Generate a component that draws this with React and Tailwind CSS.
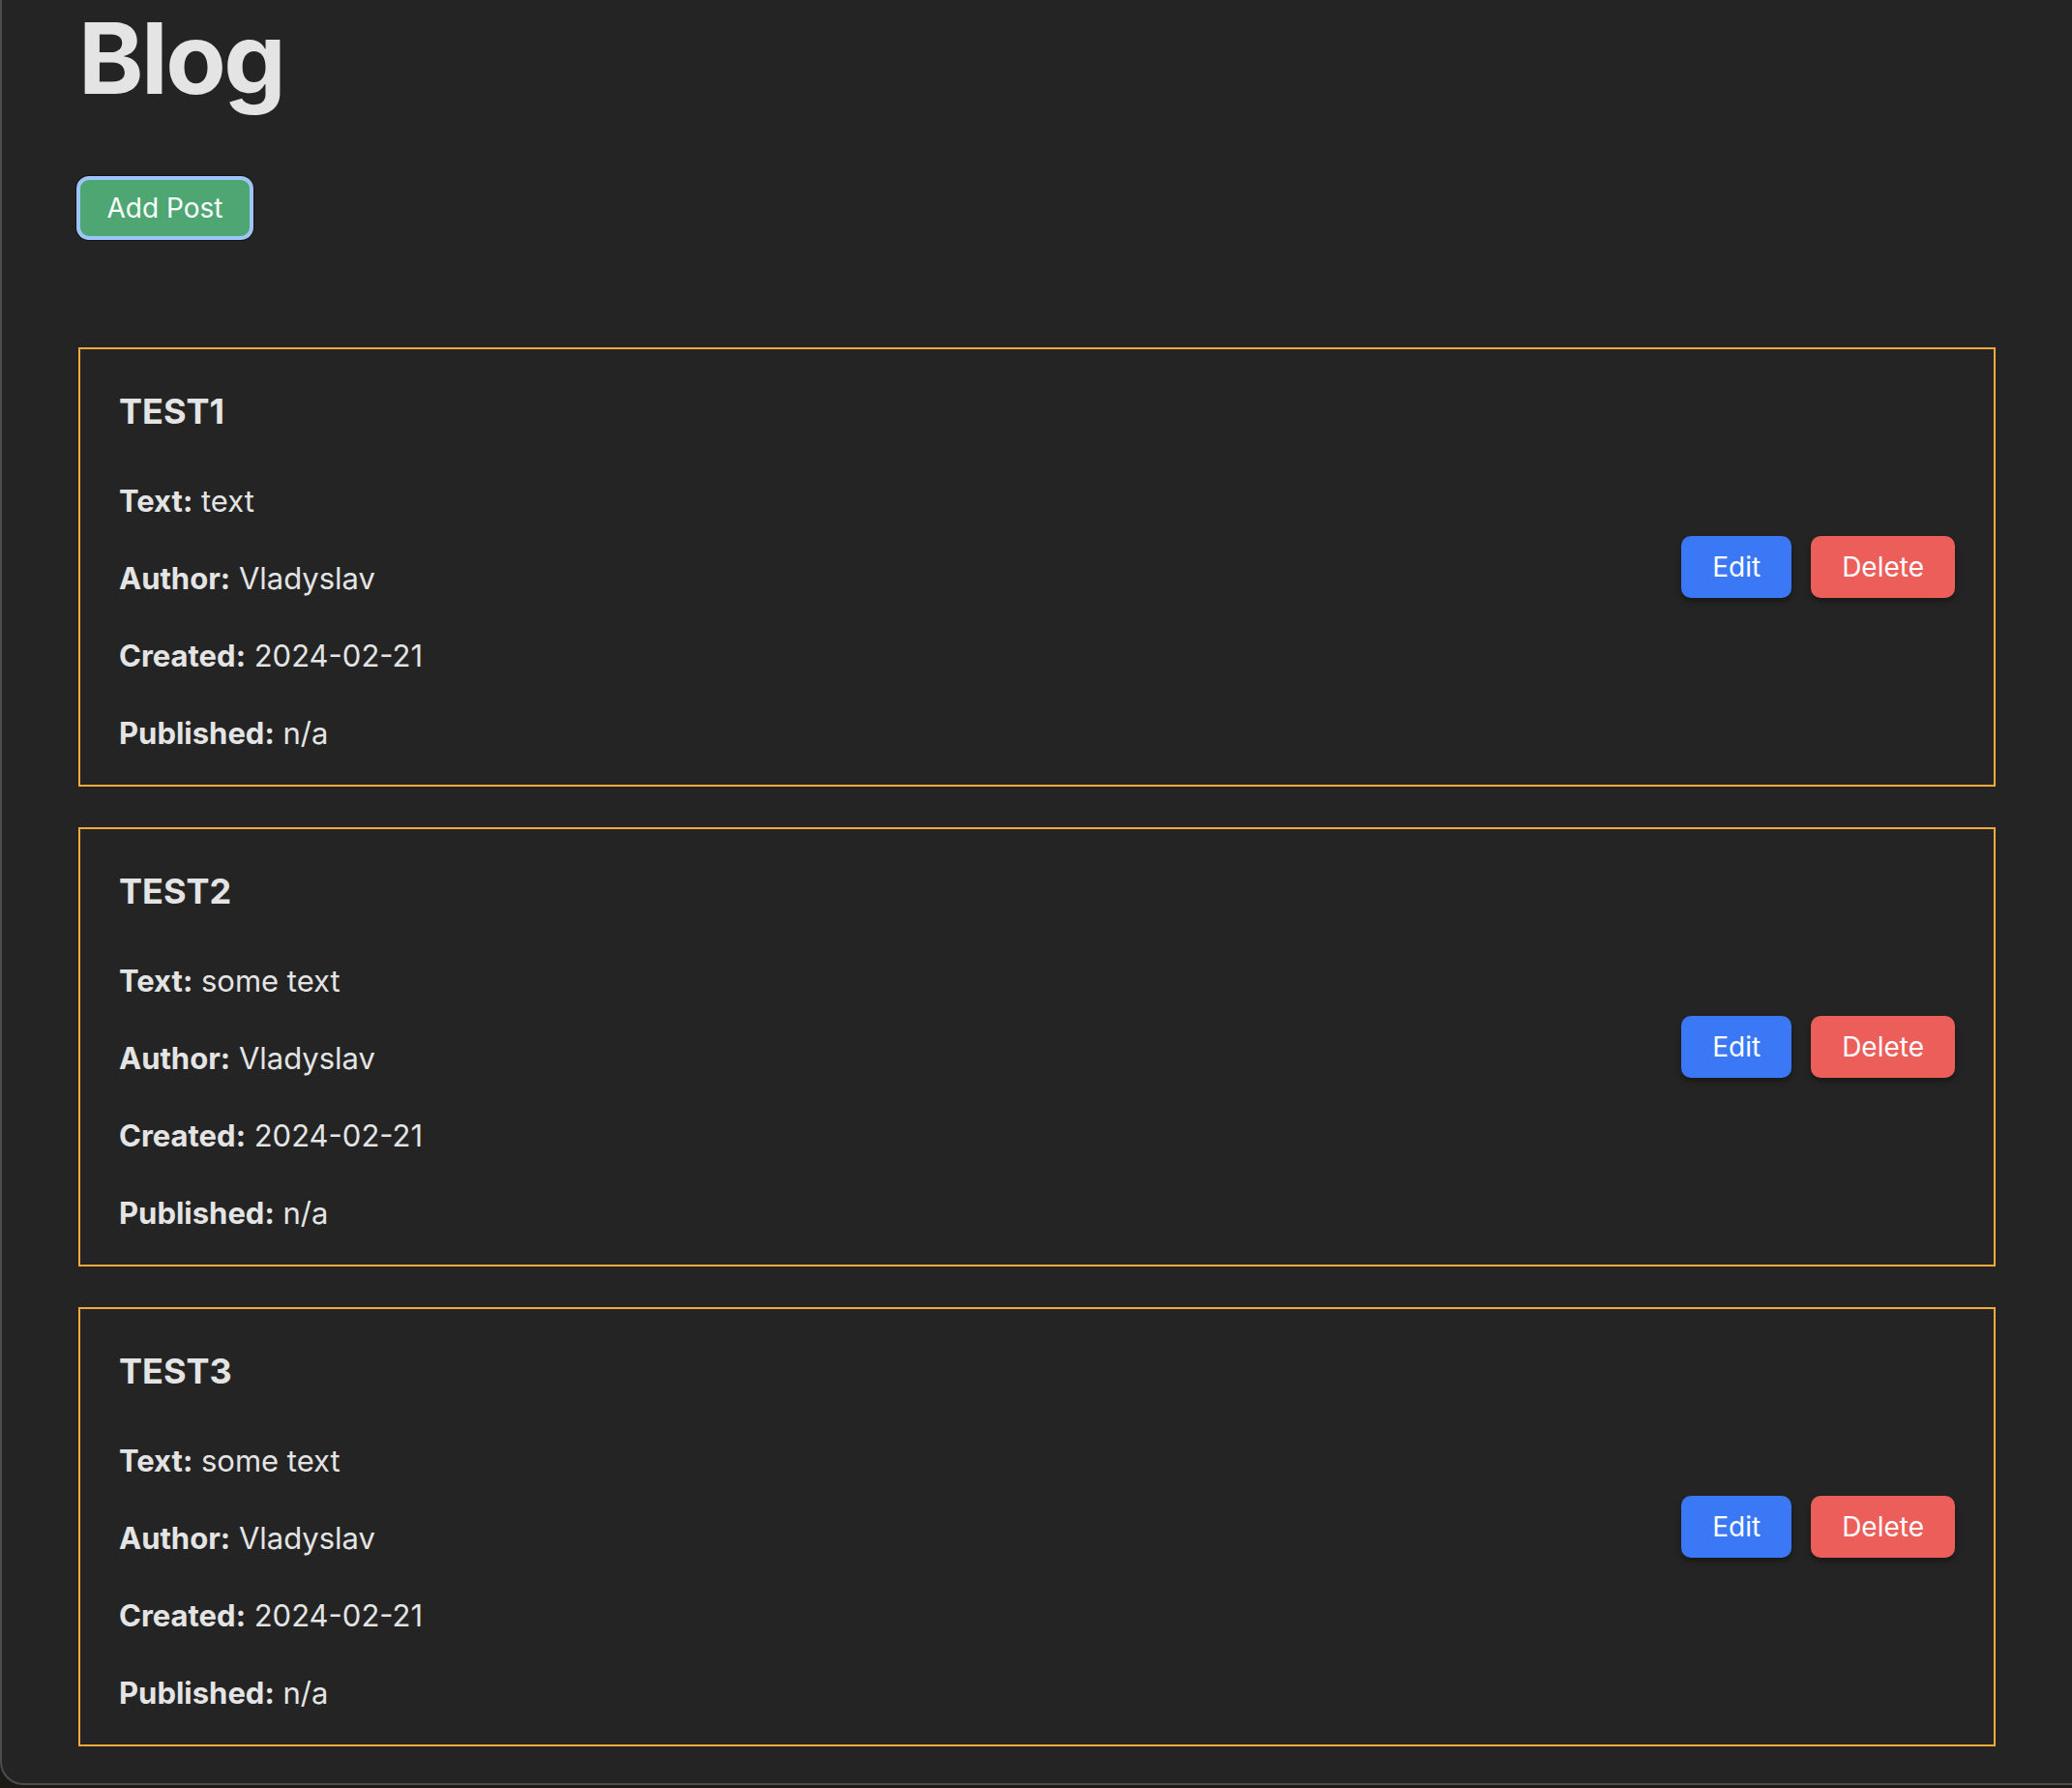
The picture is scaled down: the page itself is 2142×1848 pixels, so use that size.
import React from "react";

const posts = [
  { id: 1, title: "TEST1", text: "text", author: "Vladyslav", created: "2024-02-21", published: "n/a" },
  { id: 2, title: "TEST2", text: "some text", author: "Vladyslav", created: "2024-02-21", published: "n/a" },
  { id: 3, title: "TEST3", text: "some text", author: "Vladyslav", created: "2024-02-21", published: "n/a" },
];

const Row = ({ label, value }) => (
  <p className="text-[31px] leading-[48px]">
    <span className="font-bold">{label}:</span> {value}
  </p>
);

const PostCard = ({ post }) => (
  <div className="h-[454px] border-2 border-[#f4a93c] px-10 flex items-center justify-between">
    <div className="self-start pt-[36px] flex flex-col">
      <h2 className="text-[36px] leading-[56px] font-bold">{post.title}</h2>
      <div className="mt-[41px] flex flex-col gap-8">
        <Row label="Text" value={post.text} />
        <Row label="Author" value={post.author} />
        <Row label="Created" value={post.created} />
        <Row label="Published" value={post.published} />
      </div>
    </div>
    <div className="flex items-center gap-5">
      <button className="bg-[#3b78f6] text-white text-[28px] leading-[40px] py-3 px-8 rounded-[10px] shadow-[0_4px_6px_rgba(0,0,0,0.35)]">
        Edit
      </button>
      <button className="bg-[#ec5e59] text-white text-[28px] leading-[40px] py-3 px-8 rounded-[10px] shadow-[0_4px_6px_rgba(0,0,0,0.35)]">
        Delete
      </button>
    </div>
  </div>
);

export default function App() {
  return (
    <div className="w-[2142px] h-[1848px] bg-[#1d1a16] overflow-hidden font-['Inter',sans-serif]">
      <div className="h-[1845px] bg-[#242424] border-l-2 border-b-2 border-[#4d4d4d] rounded-bl-[24px] px-[79px] pt-[4px] text-[#e4e4e4] overflow-hidden">
        <h1 className="text-[102px] leading-[112px] font-bold tracking-[-2.5px]">Blog</h1>

        <button className="mt-[70px] ml-[2px] h-[58px] w-[175px] bg-[#4ea773] text-white text-[28px] leading-[40px] rounded-[9px] shadow-[0_0_0_4px_#9ec5f8,0_0_0_5px_#141414]">
          Add Post
        </button>

        <div className="mt-[115px] flex flex-col gap-[42px]">
          {posts.map((post) => (
            <PostCard key={post.id} post={post} />
          ))}
        </div>
      </div>
    </div>
  );
}
